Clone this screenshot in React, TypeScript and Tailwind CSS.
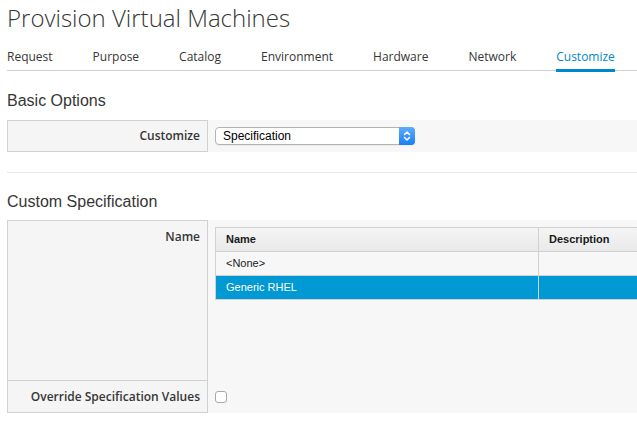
import React from "react";

const tabs = ["Request", "Purpose", "Catalog", "Environment", "Hardware", "Network", "Customize"];

function MacSelect() {
  return (
    <div className="ml-[7px] flex h-[18px] w-[200px] shrink-0 items-stretch rounded-[4px] border border-[#b3b3b3] bg-white shadow-[0_1px_0_rgba(0,0,0,0.05)]">
      <div className="flex flex-1 items-center pl-[7px] font-['Liberation_Sans',Arial,sans-serif] text-[12px] leading-none text-black">
        Specification
      </div>
      <div className="-my-px -mr-px flex w-[16px] items-center justify-center rounded-r-[4px] bg-[linear-gradient(#5eabfd,#1a7ff5)]">
        <svg width="8" height="12" viewBox="0 0 8 12" fill="none" stroke="white" strokeWidth="1.5" strokeLinecap="round" strokeLinejoin="round">
          <path d="M1.5 4.5 L4 2 L6.5 4.5" />
          <path d="M1.5 7.5 L4 10 L6.5 7.5" />
        </svg>
      </div>
    </div>
  );
}

export default function App() {
  return (
    <div className="h-[423px] w-[637px] overflow-hidden bg-white pl-[7px] font-['Open_Sans',sans-serif] text-[#363636]">
      <h1 className="pt-[3px] text-[24px] font-light leading-[30px] text-[#363636]">Provision Virtual Machines</h1>

      <ul className="mt-[14px] flex gap-[40px] border-b border-[#d1d1d1] text-[12px] leading-[18px]">
        {tabs.map((t) => (
          <li key={t} className={"relative pb-[4px] pt-[1px] " + (t === "Customize" ? "text-[#0088ce]" : "text-[#363636]")}>
            {t}
            {t === "Customize" && <span className="absolute bottom-[-2px] left-0 right-0 h-[3px] bg-[#0088ce]" />}
          </li>
        ))}
      </ul>

      <h2 className="mt-[20px] font-['Liberation_Sans',Arial,sans-serif] text-[16px] leading-[20px] text-[#363636]">Basic Options</h2>

      <div className="mt-[9px] flex h-[32px] items-center bg-[#f7f7f7]">
        <div className="flex h-full w-[201px] shrink-0 items-center justify-end border border-[#d1d1d1] bg-[#f5f5f5] pr-[7px] text-[12px] font-semibold">
          Customize
        </div>
        <MacSelect />
      </div>

      <div className="mt-[20px] border-t border-[#e7e7e7]" />

      <h2 className="mt-[19px] font-['Liberation_Sans',Arial,sans-serif] text-[16px] leading-[20px] text-[#363636]">Custom Specification</h2>

      <div className="mt-[8px] bg-[#f7f7f7]">
        <div className="flex h-[161px] items-start">
          <div className="h-full w-[201px] shrink-0 border border-[#d1d1d1] bg-[#f5f5f5] pr-[7px] pt-[7px] text-right text-[12px] leading-[18px] font-semibold">
            Name
          </div>
          <div className="ml-[7px] mt-[7px] w-[440px] shrink-0 border border-[#d1d1d1] font-['Liberation_Sans',Arial,sans-serif] text-[11px]">
            <div className="flex h-[24px] border-b border-[#d1d1d1] bg-[linear-gradient(#f5f5f5,#e9e9e9)] font-bold text-[#1a1a1a]">
              <div className="flex w-[323px] items-center border-r border-[#d1d1d1] pl-[10px]">Name</div>
              <div className="flex flex-1 items-center pl-[10px]">Description</div>
            </div>
            <div className="flex h-[24px] border-b border-[#d1d1d1] bg-[#f7f7f7] text-[#222]">
              <div className="flex w-[323px] items-center border-r border-[#d1d1d1] pl-[10px]">&lt;None&gt;</div>
              <div className="flex-1" />
            </div>
            <div className="flex h-[23px] bg-[#0099d3] text-white">
              <div className="flex w-[323px] items-center border-r border-[#d1d1d1] pl-[10px]">Generic RHEL</div>
              <div className="flex-1" />
            </div>
          </div>
        </div>
        <div className="flex h-[32px] items-center">
          <div className="flex h-full w-[201px] shrink-0 items-center justify-end border border-t-0 border-[#d1d1d1] bg-[#f5f5f5] pr-[7px] text-[12px] font-semibold">
            Override Specification Values
          </div>
          <input type="checkbox" className="ml-[7px] h-[12px] w-[12px] appearance-none rounded-[3px] border border-[#a9a9a9] bg-white" />
        </div>
      </div>
    </div>
  );
}
